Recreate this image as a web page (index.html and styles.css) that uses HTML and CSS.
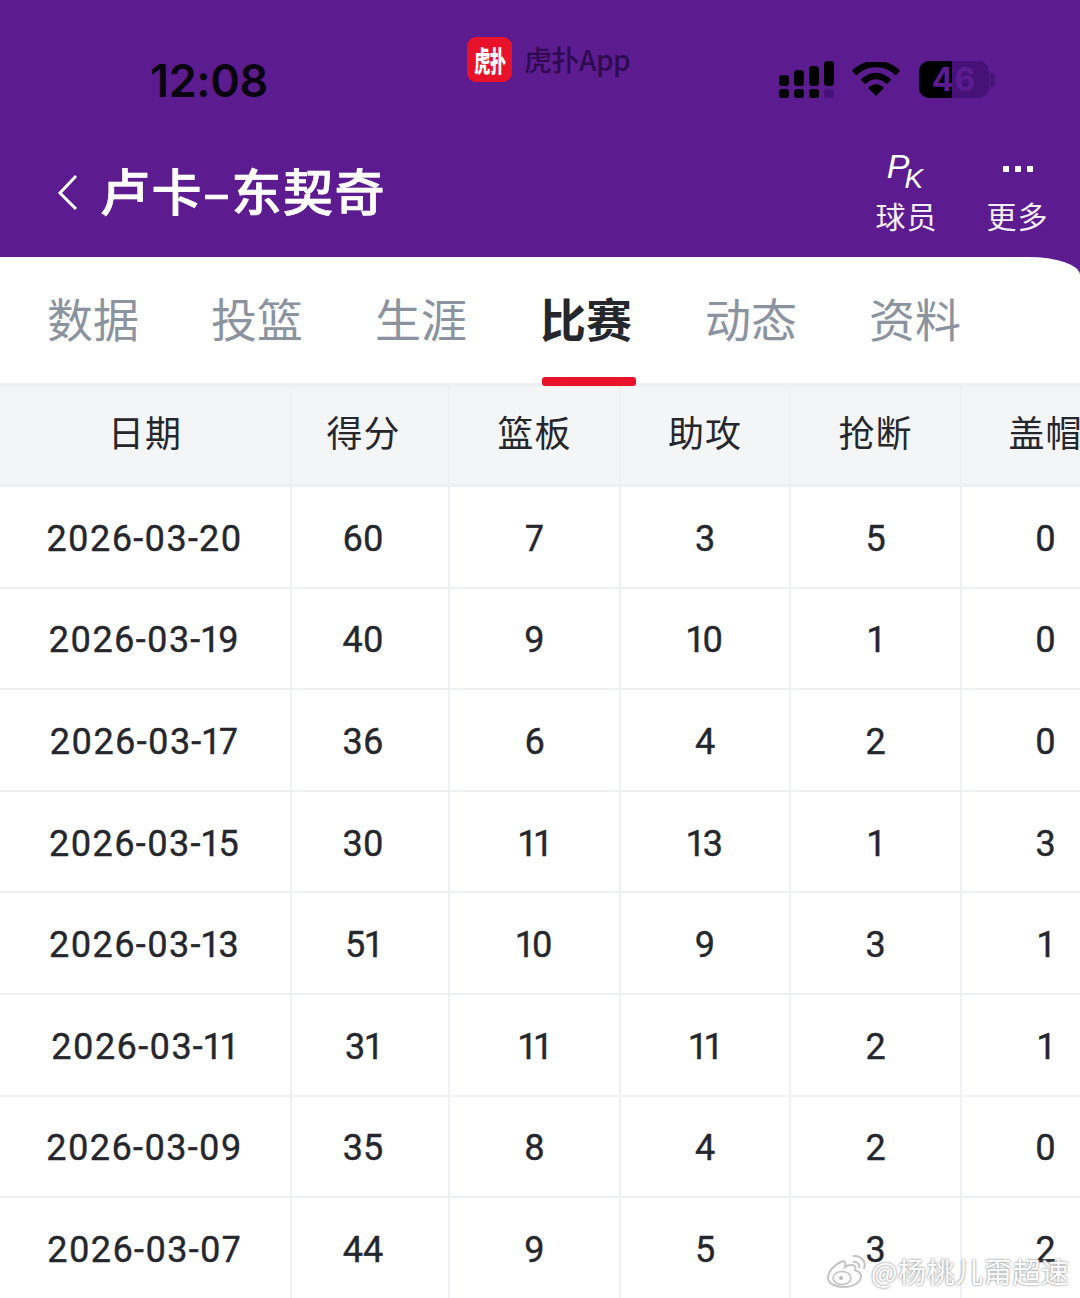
FILE: index.html
```html
<!DOCTYPE html>
<html lang="zh">
<head>
<meta charset="utf-8">
<title>卢卡-东契奇</title>
<link rel="stylesheet" href="styles.css">
</head>
<body>
<div class="page">
  <header class="top">
    <div class="status">
      <div class="time">12:08</div>
      <div class="island">
        <span class="logo"><span class="logo-text">虎扑</span></span>
        <span class="app-name">虎扑App</span>
      </div>
      <div class="sys">
        <svg class="signal" width="56" height="38" viewBox="0 0 56 38">
          <g fill="#000">
            <rect x="0" y="14" width="10" height="11" rx="3.5"/><rect x="15" y="9" width="10" height="16" rx="3.5"/><rect x="30" y="5" width="10" height="20" rx="3.5"/><rect x="45" y="0" width="10" height="25" rx="3.5"/>
            <rect x="0" y="28" width="10" height="9" rx="3"/><rect x="15" y="28" width="10" height="9" rx="3"/><rect x="30" y="28" width="10" height="9" rx="3"/>
          </g>
          <rect x="45" y="28" width="10" height="9" rx="3" fill="#47117a"/>
        </svg>
        <svg class="wifi" width="48" height="36" viewBox="0 0 48 36">
          <path d="M2 11 C15 -1 33 -1 46 11" fill="none" stroke="#000" stroke-width="6.5"/>
          <path d="M11 20 C19 12 29 12 37 20" fill="none" stroke="#000" stroke-width="6.5"/>
          <path d="M16 26 C21 21 27 21 32 26 L24 34 Z" fill="#000"/>
        </svg>
        <div class="battery">
          <div class="batt-body"><span class="batt-fill"></span><span class="batt-num">46</span></div>
          <span class="batt-tip"></span>
        </div>
      </div>
    </div>
    <div class="nav">
      <svg class="back" width="24" height="38" viewBox="0 0 24 38"><path d="M20 2 L4 19 L20 35" fill="none" stroke="#fff" stroke-width="3"/></svg>
      <h1 class="title">卢卡–东契奇</h1>
      <div class="actions">
        <div class="action action-pk">
          <div class="pk"><span class="pk-p">P</span><span class="pk-k">K</span></div>
          <div class="action-label">球员</div>
        </div>
        <div class="action action-more">
          <div class="dots"><i></i><i></i><i></i></div>
          <div class="action-label">更多</div>
        </div>
      </div>
    </div>
  </header>
  <main class="panel">
    <nav class="tabs">
      <span class="tab tab-1">数据</span>
      <span class="tab tab-2">投篮</span>
      <span class="tab tab-3">生涯</span>
      <span class="tab tab-4 active">比赛</span>
      <span class="tab tab-5">动态</span>
      <span class="tab tab-6">资料</span>
    </nav>
    <div class="grid">
      <div class="row head"><div class="cell">日期</div><div class="cell pts">得分</div><div class="cell">篮板</div><div class="cell">助攻</div><div class="cell">抢断</div><div class="cell">盖帽</div></div>
      <div class="row"><div class="cell date">2026-03-20</div><div class="cell pts">60</div><div class="cell">7</div><div class="cell">3</div><div class="cell">5</div><div class="cell">0</div></div>
      <div class="row"><div class="cell date">2026-03-19</div><div class="cell pts">40</div><div class="cell">9</div><div class="cell">10</div><div class="cell">1</div><div class="cell">0</div></div>
      <div class="row"><div class="cell date">2026-03-17</div><div class="cell pts">36</div><div class="cell">6</div><div class="cell">4</div><div class="cell">2</div><div class="cell">0</div></div>
      <div class="row"><div class="cell date">2026-03-15</div><div class="cell pts">30</div><div class="cell">11</div><div class="cell">13</div><div class="cell">1</div><div class="cell">3</div></div>
      <div class="row"><div class="cell date">2026-03-13</div><div class="cell pts">51</div><div class="cell">10</div><div class="cell">9</div><div class="cell">3</div><div class="cell">1</div></div>
      <div class="row"><div class="cell date">2026-03-11</div><div class="cell pts">31</div><div class="cell">11</div><div class="cell">11</div><div class="cell">2</div><div class="cell">1</div></div>
      <div class="row"><div class="cell date">2026-03-09</div><div class="cell pts">35</div><div class="cell">8</div><div class="cell">4</div><div class="cell">2</div><div class="cell">0</div></div>
      <div class="row"><div class="cell date">2026-03-07</div><div class="cell pts">44</div><div class="cell">9</div><div class="cell">5</div><div class="cell">3</div><div class="cell">2</div></div>
    </div>
  </main>
  <div class="watermark">
    <svg width="42" height="34" viewBox="0 0 42 34">
      <path d="M17 7 C9 10 2 17 2 24 C2 30 10 33 18 33 C28 33 35 28 35 22 C35 18 31 17 29 16 C30 13 29 11 26 11 C23 11 20 12 19 13 C20 9 19 7 17 7 Z" fill="#fff" stroke="#c4c4c4" stroke-width="2"/>
      <ellipse cx="16" cy="24" rx="9" ry="6.5" fill="none" stroke="#c4c4c4" stroke-width="1.6"/>
      <circle cx="15" cy="24" r="2" fill="#bbb"/>
      <path d="M27 8 C31 7 34 10 33 14 M27 2 C35 1 41 8 38 15" fill="none" stroke="#c4c4c4" stroke-width="2"/>
    </svg>
    <span>@杨桃儿甭超速</span>
  </div>
</div>
</body>
</html>
```
FILE: styles.css
```css
* { box-sizing: border-box; }
html, body { margin: 0; padding: 0; }
body { font-family: "Noto Sans CJK SC", "Noto Sans", sans-serif; background: #fff; }
.page { position: relative; width: 1080px; height: 1298px; overflow: hidden; background: #5c1c8f; }

.top { height: 257px; color: #fff; }
.status { height: 132px; position: relative; display: flex; align-items: flex-start; }
.time { margin: 51px 0 0 150px; width: 240px; font: 600 45px/60px "Inter", "Roboto", sans-serif; color: #0a0410; letter-spacing: -0.4px; }
.island { margin: 37px 0 0 77px; width: 260px; display: flex; align-items: center; gap: 12px; }
.logo { width: 45px; height: 45px; border-radius: 9px; background: #e8132a; display: flex; align-items: center; justify-content: center; overflow: hidden; }
.logo-text { font-weight: 900; font-size: 28px; line-height: 1; letter-spacing: -1px; color: #fff; transform: scaleX(0.58); white-space: nowrap; }
.app-name { font-size: 28px; line-height: 46px; font-weight: 500; color: #2e0a50; letter-spacing: -0.5px; margin-top: -2px; }
.sys { position: absolute; left: 779px; top: 61px; display: flex; align-items: flex-start; }
.wifi { margin: 1px 0 0 17px; }
.battery { margin: 0 0 0 19px; display: flex; align-items: center; }
.batt-body { position: relative; width: 70px; height: 37px; border-radius: 10px; background: #47117a; overflow: hidden; text-align: center; }
.batt-fill { position: absolute; left: 0; top: 0; width: 33px; height: 100%; background: #000; }
.batt-num { position: relative; font: 700 32px/37px "Inter", "Roboto", sans-serif; color: #5c1c8f; letter-spacing: 1px; }
.batt-tip { width: 5px; height: 14px; background: #47117a; border-radius: 0 4px 4px 0; margin-left: 1px; }

.nav { height: 125px; display: flex; align-items: flex-start; position: relative; }
.back { margin: 42px 0 0 56px; flex: none; }
.title { margin: 21px 0 0 20px; font-size: 50px; line-height: 72px; font-weight: 500; -webkit-text-stroke: 0.7px #fff; color: #fff; letter-spacing: 1.5px; white-space: nowrap; }
.actions { position: absolute; right: 7px; top: 0; display: flex; width: 220px; }
.action { width: 112px; text-align: center; }
.action-pk { margin-left: -2px; }
.pk { height: 50px; position: relative; font: italic 400 34px/1 "Liberation Sans", sans-serif; padding-top: 19px; }
.pk-p { position: relative; left: 1px; top: -2px; }
.pk-k { position: relative; left: -4px; top: 8px; font-size: 28px; }
.dots { height: 50px; display: flex; justify-content: center; gap: 6px; padding-top: 34px; }
.dots i { display: block; width: 6px; height: 6px; background: #fff; }
.action-label { margin-top: 13px; font-size: 30px; line-height: 40px; font-weight: 400; color: #f6effb; letter-spacing: 1px; }

.panel { height: 1041px; background: #fff; border-top-right-radius: 52px 18px; }
.tabs { height: 126px; position: relative; display: flex; padding-left: 47px; gap: 73px; background: transparent; }
.tab { width: 91px; font-size: 46px; line-height: 121px; color: #8b939f; white-space: nowrap; }
.tab-4 { margin-left: 1px; }
.tab-5 { margin-left: 1px; }
.tab.active { font-weight: 700; color: #25272c; position: relative; }
.tab.active::after { content: ""; position: absolute; left: 2px; top: 120px; width: 94px; height: 9px; border-radius: 3px; background: #e8132a; }

.grid { width: 1131px; border-top: 4px solid #eff0f4; background: #fff; }
.row { display: grid; grid-template-columns: 292px 158px 171px 170px 171px 169px; height: 101.6px; border-bottom: 2px solid #eef0f4; font: 400 36px/1 "Roboto", sans-serif; -webkit-text-stroke: 0.4px #25272c; font-variant-numeric: proportional-nums; color: #25272c; }
.row.head { height: 100px; background: #f3f5f7; border-bottom-width: 3px; -webkit-text-stroke: 0; }
.cell { display: flex; align-items: center; justify-content: center; border-right: 2px solid #eef0f4; padding-top: 4px; white-space: nowrap; }
.cell.pts { padding-right: 14px; }
.cell.date { letter-spacing: 1.2px; padding-right: 1px; }
.head .cell { font-family: "Noto Sans CJK SC", sans-serif; font-weight: 400; font-size: 36px; letter-spacing: 1px; padding-top: 0; padding-bottom: 10px; }
.head .cell.pts { padding-right: 13px; }

.watermark { position: absolute; left: 826px; top: 1251px; display: flex; align-items: center; gap: 3px; }
.watermark span { font-size: 28px; line-height: 40px; color: #fff; letter-spacing: 0.6px; text-shadow: 0 0 2px #9a9a9a, 0 0 3px #aaa; white-space: nowrap; }
```
